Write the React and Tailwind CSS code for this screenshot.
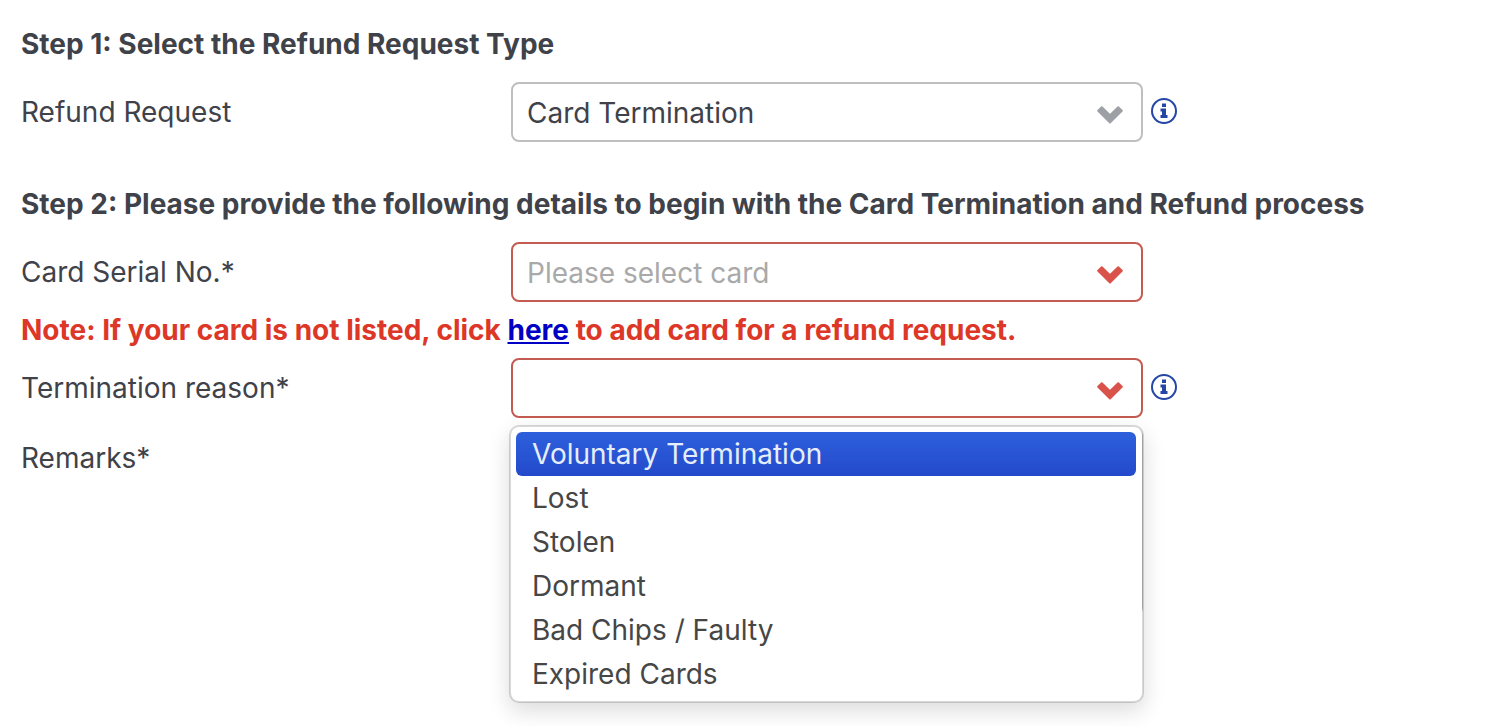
import React, { useState } from 'react';

const terminationReasons = [
  'Voluntary Termination',
  'Lost',
  'Stolen',
  'Dormant',
  'Bad Chips / Faulty',
  'Expired Cards',
];

function Chevron({ className }) {
  return (
    <svg
      viewBox="0 0 26 18"
      aria-hidden="true"
      className={`pointer-events-none absolute right-5 top-6 h-[18px] w-[26px] ${className}`}
    >
      <path
        d="M1.200 4.800 4.800 1.200 13 9.200l8.200-8 3.600 3.600L13 16.500Z"
        fill="currentColor"
        stroke="currentColor"
        strokeWidth="2"
        strokeLinejoin="round"
      />
    </svg>
  );
}

function InfoButton({ label }) {
  return (
    <button type="button" aria-label={label} className="ml-2 mb-0.5 shrink-0 text-[#2447a6]">
      <svg viewBox="0 0 26 26" className="block h-[26px] w-[26px]" aria-hidden="true">
        <circle cx="13" cy="13" r="12" fill="none" stroke="currentColor" strokeWidth="2" />
        <path
          d="M11 5.500h4v3.500h-4zM9.500 10.500H15v6.500h1.500v3H9.500v-3H11v-3.500H9.500z"
          fill="currentColor"
        />
      </svg>
    </button>
  );
}

function Select({ id, invalid, className = '', children, ...props }) {
  return (
    <>
      <select
        id={id}
        className={`block h-[60px] w-full appearance-none rounded-lg border-2 bg-white pl-3.5 pr-14 pt-0.5 outline-none ${
          invalid ? 'border-[#c45b50]' : 'border-[#bfbfbf]'
        } ${className}`}
        {...props}
      >
        {children}
      </select>
      <Chevron className={invalid ? 'text-[#d9534a]' : 'text-[#9da0a4]'} />
    </>
  );
}

function Row({ id, label, info, children }) {
  return (
    <div className="flex items-start">
      <label htmlFor={id} className="w-[490px] leading-[60px]">
        {label}
      </label>
      <div className="relative max-w-[632px] flex-1">{children}</div>
      {info && (
        <div className="flex h-[60px] items-center">
          <InfoButton label={info} />
        </div>
      )}
    </div>
  );
}

export default function App() {
  const [reason, setReason] = useState('');
  const [open, setOpen] = useState(true);
  const [active, setActive] = useState(0);

  const pickReason = (value) => {
    setReason(value);
    setOpen(false);
  };

  return (
    <form className="min-h-screen bg-white px-5 pb-24 pt-6 font-['Inter',sans-serif] text-[28px] text-[#40424a]">
      <div className="pl-px">
        {/* Step 1 */}
        <h2 className="mb-[18px] font-bold leading-10">Step 1: Select the Refund Request Type</h2>
        <Row id="request" label="Refund Request" info="About refund requests">
          <Select id="request">
            <option>Card Termination</option>
          </Select>
        </Row>

        {/* Step 2 */}
        <h2 className="mb-[18px] mt-[42px] font-bold leading-10">
          Step 2: Please provide the following details to begin with the Card Termination and Refund process
        </h2>
        <Row id="serial" label="Card Serial No.*">
          <Select id="serial" invalid className="text-[#a9a9a9]">
            <option>Please select card</option>
          </Select>
        </Row>
        <p className="my-2 font-bold leading-10 text-[#dc3727]">
          Note: If your card is not listed, click{' '}
          <a href="#add-card" className="text-[#0000c4] underline">
            here
          </a>{' '}
          to add card for a refund request.
        </p>
        <Row id="reason" label="Termination reason*" info="About termination reasons">
          <Select id="reason" invalid value={reason} onChange={(e) => pickReason(e.target.value)}>
            <option value="" aria-label="No reason selected"></option>
            {terminationReasons.map((item) => (
              <option key={item}>{item}</option>
            ))}
          </Select>
          {open && (
            <ul
              role="listbox"
              aria-label="Termination reason"
              className="absolute -left-0.5 -right-px top-[67px] z-10 rounded-[10px] border-2 border-black/15 bg-white bg-clip-padding py-[5px] pl-[5px] pr-1.5 text-[#464646] shadow-[0_8px_22px_rgba(0,0,0,0.14)]"
            >
              {terminationReasons.map((item, i) => (
                <li
                  key={item}
                  role="option"
                  aria-selected={i === active}
                  onMouseEnter={() => setActive(i)}
                  onClick={() => pickReason(item)}
                  className={`cursor-default rounded-md px-4 leading-[44px] ${
                    i === active ? 'bg-linear-to-b from-[#2d60dc] to-[#2449cb] text-[#e6edfb]' : ''
                  }`}
                >
                  {item}
                </li>
              ))}
            </ul>
          )}
        </Row>
        <div className="mt-2.5">
          <Row id="remarks" label="Remarks*">
            <textarea
              id="remarks"
              className="block h-[188px] w-full resize-none rounded-lg border-2 border-[#bfbfbf] px-3.5 py-2 outline-none"
            />
          </Row>
        </div>
      </div>
    </form>
  );
}
